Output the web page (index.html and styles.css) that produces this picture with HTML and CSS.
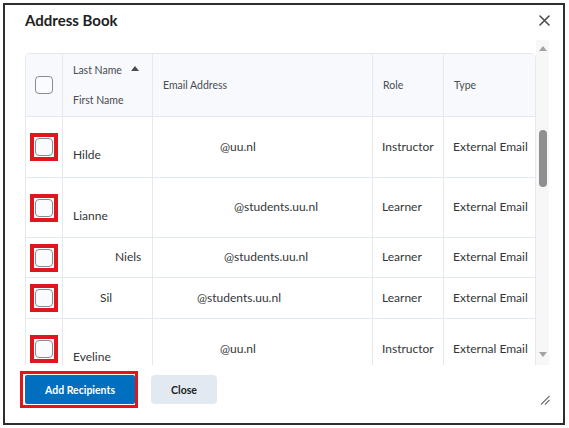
FILE: index.html
```html
<!DOCTYPE html>
<html lang="en">
<head>
<meta charset="utf-8">
<title>Address Book</title>
<link rel="stylesheet" href="styles.css">
</head>
<body>
<div class="frame">
  <div class="dialog">
    <header class="dlg-head">
      <h1 class="dlg-title">Address Book</h1>
      <button class="dlg-x" aria-label="Close">
        <svg width="11" height="11" viewBox="0 0 11 11"><path d="M1 1 L10 10 M10 1 L1 10" stroke="#494c4e" stroke-width="1.6" fill="none" stroke-linecap="round"/></svg>
      </button>
    </header>

    <div class="dlg-body">
      <div class="scroller">
        <div class="grid">
          <div class="row row-head">
            <div class="cell cell-check"><span class="cb"></span></div>
            <div class="cell cell-hname">
              <span class="hline">Last Name <span class="sort"></span></span>
              <span class="hline">First Name</span>
            </div>
            <div class="cell cell-h">Email Address</div>
            <div class="cell cell-h">Role</div>
            <div class="cell cell-h">Type</div>
          </div>

          <div class="row row-tall">
            <div class="cell cell-check"><span class="hl"><span class="cb"></span></span></div>
            <div class="cell cell-name2"><span class="nline"></span><span class="nline">Hilde</span></div>
            <div class="cell"><span class="em em-67">@uu.nl</span></div>
            <div class="cell">Instructor</div>
            <div class="cell">External Email</div>
          </div>

          <div class="row row-tall2">
            <div class="cell cell-check"><span class="hl"><span class="cb"></span></span></div>
            <div class="cell cell-name2"><span class="nline"></span><span class="nline">Lianne</span></div>
            <div class="cell"><span class="em em-81">@students.uu.nl</span></div>
            <div class="cell">Learner</div>
            <div class="cell">External Email</div>
          </div>

          <div class="row row-short">
            <div class="cell cell-check"><span class="hl"><span class="cb"></span></span></div>
            <div class="cell"><span class="em em-52">Niels</span></div>
            <div class="cell"><span class="em em-71">@students.uu.nl</span></div>
            <div class="cell">Learner</div>
            <div class="cell">External Email</div>
          </div>

          <div class="row row-short2">
            <div class="cell cell-check"><span class="hl"><span class="cb"></span></span></div>
            <div class="cell"><span class="em em-37">Sil</span></div>
            <div class="cell"><span class="em em-44">@students.uu.nl</span></div>
            <div class="cell">Learner</div>
            <div class="cell">External Email</div>
          </div>

          <div class="row row-tall">
            <div class="cell cell-check"><span class="hl"><span class="cb"></span></span></div>
            <div class="cell cell-name2"><span class="nline"></span><span class="nline">Eveline</span></div>
            <div class="cell"><span class="em em-67">@uu.nl</span></div>
            <div class="cell">Instructor</div>
            <div class="cell">External Email</div>
          </div>
        </div>
      </div>

      <div class="sbar">
        <div class="sbar-btn"><span class="tri-up"></span></div>
        <div class="sbar-track"><div class="sbar-thumb"></div></div>
        <div class="sbar-btn"><span class="tri-down"></span></div>
      </div>
    </div>

    <footer class="dlg-foot">
      <span class="hl-btn"><button class="btn btn-primary">Add Recipients</button></span>
      <button class="btn btn-secondary">Close</button>
      <span class="grip">
        <svg width="10" height="10" viewBox="0 0 10 10"><path d="M9.5 1 L1 9.5 M9.5 5 L5 9.5" stroke="#6e7376" stroke-width="1.1" fill="none"/></svg>
      </span>
    </footer>
  </div>
</div>
</body>
</html>
```

FILE: styles.css
```css
* { box-sizing: border-box; }

body {
  margin: 0;
  background: #ffffff;
  font-family: Lato, "Noto Sans", sans-serif;
  color: #202122;
}

.frame {
  margin: 3px;
  width: 562px;
  height: 422px;
  border: 2px solid #2e2e2e;
  background: #ffffff;
}

.dialog {
  display: flex;
  flex-direction: column;
  height: 100%;
}

.dlg-head {
  flex-shrink: 0;
  display: flex;
  align-items: center;
  justify-content: space-between;
  height: 35px;
  padding: 0 13px 5px 20px;
}

.dlg-title {
  margin: 0;
  font-size: 15px;
  font-weight: 700;
  line-height: 20px;
  color: #202122;
}

.dlg-x {
  border: 0;
  background: none;
  padding: 0;
  width: 11px;
  height: 11px;
  display: flex;
}

.dlg-body {
  flex-shrink: 0;
  display: flex;
  height: 325px;
  padding-left: 20px;
}

.scroller {
  width: 511px;
  height: 325px;
  overflow: hidden;
  padding-top: 13px;
}

.grid {
  border-left: 1px solid #e3e9f1;
  border-top: 1px solid #e3e9f1;
  border-top-left-radius: 5px;
  border-top-right-radius: 5px;
  overflow: hidden;
}

.row {
  display: grid;
  grid-template-columns: 37px 90px 220px 71px 92px;
}

.row-head { height: 63px; background: #f7f9fc; }
.row-tall { height: 61px; }
.row-tall2 { height: 60px; }
.row-short { height: 40px; }
.row-short2 { height: 41px; }

.cell {
  display: flex;
  align-items: center;
  padding-left: 9px;
  padding-bottom: 2px;
  border-right: 1px solid #e3e9f1;
  border-bottom: 1px solid #e3e9f1;
  font-size: 12px;
  color: #333638;
  white-space: nowrap;
}

.row-head .cell { font-size: 10.5px; color: #494c4e; padding-bottom: 1px; }

.cell-h { padding-left: 10px; }

.cell-check {
  justify-content: center;
  padding-left: 0;
}
.row .cell-check { padding-bottom: 0; }

.cell-hname {
  flex-direction: column;
  align-items: flex-start;
  justify-content: center;
  padding-left: 10px;
}

.hline {
  display: flex;
  align-items: center;
  height: 30px;
}

.sort {
  display: inline-block;
  margin-left: 9px;
  width: 0;
  height: 0;
  border-left: 4px solid transparent;
  border-right: 4px solid transparent;
  border-bottom: 5px solid #494c4e;
  margin-top: -2px;
}

.cell-name2 {
  flex-direction: column;
  align-items: flex-start;
  justify-content: center;
  padding-left: 10px;
}

.nline {
  display: block;
  height: 18px;
  line-height: 18px;
}

.em-37 { padding-left: 28px; }
.em-44 { padding-left: 35px; }
.em-52 { padding-left: 43px; }
.em-67 { padding-left: 58px; }
.em-71 { padding-left: 62px; }
.em-81 { padding-left: 72px; }

.cb {
  display: block;
  width: 18px;
  height: 18px;
  border: 1px solid #868c8f;
  border-radius: 4px;
  background: #f9fbff;
}

.hl {
  display: block;
  border: 4px solid #e0161f;
  padding: 1px;
}

.sbar {
  width: 13px;
  height: 325px;
  background: #f7f7f7;
  display: flex;
  flex-direction: column;
  padding-bottom: 2px;
}

.sbar-btn {
  height: 17px;
  display: flex;
  align-items: center;
  justify-content: center;
}

.tri-up, .tri-down {
  width: 0;
  height: 0;
  border-left: 4px solid transparent;
  border-right: 4px solid transparent;
}
.tri-up { border-bottom: 5px solid #a3a3a3; }
.tri-down { border-top: 5px solid #a3a3a3; }

.sbar-track {
  flex: 1;
  display: flex;
  justify-content: center;
}

.sbar-thumb {
  margin-top: 73px;
  width: 8px;
  height: 57px;
  border-radius: 4px;
  background: #8f8f8f;
}

.dlg-foot {
  flex: 1;
  display: flex;
  align-items: flex-start;
  gap: 13px;
  padding: 6px 13px 14px 15px;
}

.hl-btn {
  display: flex;
  border: 3px solid #e0161f;
  padding: 1px 0 1px 2px;
}

.btn {
  height: 29px;
  border: 0;
  border-radius: 4px;
  font-family: Lato, "Noto Sans", sans-serif;
  font-size: 10.5px;
  font-weight: 700;
  padding: 0;
}

.btn-secondary { margin-top: 4px; }

.btn-primary {
  width: 110px;
  background: #006fbf;
  color: #ffffff;
  border-radius: 2px;
}

.btn-secondary {
  width: 66px;
  background: #e3e9f1;
  color: #202122;
}

.grip {
  margin-left: auto;
  margin-bottom: 4px;
  align-self: flex-end;
  display: flex;
  width: 10px;
  height: 10px;
}
```
